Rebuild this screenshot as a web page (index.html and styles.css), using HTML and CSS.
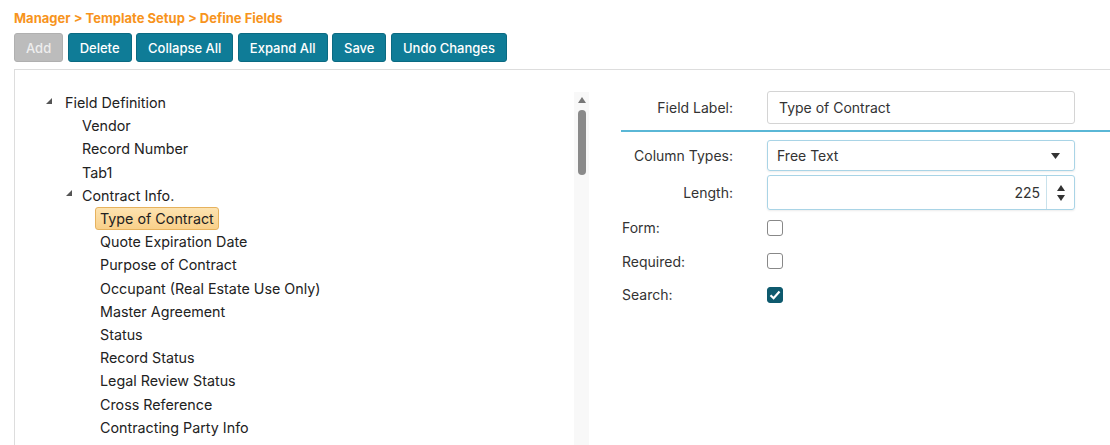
FILE: index.html
```html
<!DOCTYPE html>
<html lang="en">
<head>
    <meta charset="UTF-8">
    <title>Define Fields</title>
    <link rel="stylesheet" href="styles.css">
</head>
<body>
    <div class="crumb">Manager &gt; Template Setup &gt; Define Fields</div>

    <div class="toolbar">
        <button class="btn disabled">Add</button>
        <button class="btn">Delete</button>
        <button class="btn">Collapse All</button>
        <button class="btn">Expand All</button>
        <button class="btn">Save</button>
        <button class="btn">Undo Changes</button>
    </div>

    <div class="panel">
        <div class="tree-pane">
            <ul class="tree">
                <li class="node lvl0"><span class="arrow"><svg width="6" height="6" viewBox="0 0 6 6"><polygon points="6,0 6,6 0,6" fill="#555"/></svg></span><span class="label">Field Definition</span></li>
                <li class="node lvl1"><span class="label">Vendor</span></li>
                <li class="node lvl1"><span class="label">Record Number</span></li>
                <li class="node lvl1"><span class="label">Tab1</span></li>
                <li class="node lvl1 has-arrow"><span class="arrow"><svg width="6" height="6" viewBox="0 0 6 6"><polygon points="6,0 6,6 0,6" fill="#555"/></svg></span><span class="label">Contract Info.</span></li>
                <li class="node lvl2"><span class="label selected">Type of Contract</span></li>
                <li class="node lvl2"><span class="label">Quote Expiration Date</span></li>
                <li class="node lvl2"><span class="label">Purpose of Contract</span></li>
                <li class="node lvl2"><span class="label">Occupant (Real Estate Use Only)</span></li>
                <li class="node lvl2"><span class="label">Master Agreement</span></li>
                <li class="node lvl2"><span class="label">Status</span></li>
                <li class="node lvl2"><span class="label">Record Status</span></li>
                <li class="node lvl2"><span class="label">Legal Review Status</span></li>
                <li class="node lvl2"><span class="label">Cross Reference</span></li>
                <li class="node lvl2"><span class="label">Contracting Party Info</span></li>
            </ul>
            <div class="scrollbar">
                <svg class="up" width="8" height="6" viewBox="0 0 8 6"><polygon points="4,0 8,6 0,6" fill="#777"/></svg>
                <div class="thumb"></div>
            </div>
        </div>

        <div class="form">
            <div class="row top">
                <label class="lbl right">Field Label:</label>
                <div class="input">Type of Contract</div>
            </div>
            <div class="divider"></div>
            <div class="row">
                <label class="lbl right">Column Types:</label>
                <div class="select">
                    <span>Free Text</span>
                    <svg width="9" height="6" viewBox="0 0 9 6"><polygon points="0,0 9,0 4.5,6" fill="#333"/></svg>
                </div>
            </div>
            <div class="row length-row">
                <label class="lbl right">Length:</label>
                <div class="numeric">
                    <span class="num">225</span>
                    <span class="spin">
                        <svg width="8" height="6" viewBox="0 0 8 6"><polygon points="4,0 8,6 0,6" fill="#333"/></svg>
                        <svg width="8" height="6" viewBox="0 0 8 6"><polygon points="0,0 8,0 4,6" fill="#333"/></svg>
                    </span>
                </div>
            </div>
            <div class="row check-row first">
                <label class="lbl">Form:</label>
                <span class="check"></span>
            </div>
            <div class="row check-row">
                <label class="lbl">Required:</label>
                <span class="check"></span>
            </div>
            <div class="row check-row">
                <label class="lbl">Search:</label>
                <span class="check on"><svg width="12" height="10" viewBox="0 0 12 10"><polyline points="1.5,5.2 4.6,8.2 10.5,1.5" fill="none" stroke="#fff" stroke-width="2.2"/></svg></span>
            </div>
        </div>
    </div>
</body>
</html>
```

FILE: styles.css
```css
body {
    margin: 0;
    padding: 10px 0 0 14px;
    font-family: Inter, "Liberation Sans", sans-serif;
    color: #222;
    background: #fff;
    overflow: hidden;
}
.crumb {
    color: #f7941d;
    font-weight: 700;
    font-size: 13px;
    line-height: 17px;
}
.toolbar {
    display: flex;
    gap: 4.5px;
    margin-top: 6px;
}
.btn {
    height: 29px;
    padding: 0 11px;
    background: #0f7c97;
    border: 1px solid #0b6a82;
    border-radius: 3px;
    color: #fff;
    font-family: Inter, "Liberation Sans", sans-serif;
    font-size: 13px;
    font-weight: 500;
    cursor: pointer;
}
.btn.disabled {
    background: #bcbcbc;
    border-color: #b0b0b0;
    color: #eee;
    padding: 0 11px;
}
.panel {
    display: flex;
    margin-top: 7px;
    border-top: 1px solid #ddd;
    border-left: 1px solid #ddd;
    height: 380px;
}
.tree-pane {
    display: flex;
    width: 574px;
}
.tree {
    list-style: none;
    margin: 0;
    padding: 21px 0 0 0;
    flex: 1;
    font-size: 14.3px;
}
.node {
    display: flex;
    align-items: center;
    height: 23.2px;
}
.arrow {
    display: inline-flex;
    width: 14px;
    margin-top: -4px;
}
.lvl0 { padding-left: 31px; }
.lvl1 { padding-left: 62px; }
.lvl1.has-arrow { padding-left: 51px; }
.lvl1.has-arrow .arrow { width: 11px; }
.lvl2 { padding-left: 80px; }
.label {
    padding: 2px 4px;
    border: 1px solid transparent;
    border-radius: 3px;
    white-space: nowrap;
}
.label.selected {
    background: linear-gradient(#fde3b0, #f9d08a);
    border-color: #e6b25e;
}
.scrollbar {
    width: 15px;
    margin-top: 22px;
    background: #f8f8f8;
    display: flex;
    flex-direction: column;
    align-items: center;
}
.scrollbar .up {
    margin-top: 5px;
}
.thumb {
    width: 8px;
    height: 65px;
    margin-top: 7px;
    background: #8a8a8a;
    border-radius: 4px;
}
.form {
    flex: 1;
    padding: 21px 0 0 33px;
    font-size: 14px;
}
.row {
    display: flex;
    align-items: center;
}
.lbl {
    width: 111px;
    margin-right: 34px;
    color: #333;
}
.lbl.right {
    text-align: right;
}
.input, .select, .numeric {
    width: 308px;
    box-sizing: border-box;
    border-radius: 3px;
    display: flex;
    align-items: center;
    color: #333;
}
.input {
    height: 33px;
    border: 1px solid #d4d4d4;
    padding: 0 11px;
}
.divider {
    height: 2px;
    background: #5ab7d6;
    margin: 6px 0 8px -1px;
}
.select {
    height: 31px;
    border: 1px solid #a9d4e6;
    padding: 0 14px 0 9px;
    justify-content: space-between;
    box-shadow: 0 1px 2px rgba(0,0,0,0.08);
}
.length-row {
    margin-top: 4px;
}
.numeric {
    height: 35px;
    border: 1px solid #a9d4e6;
    box-shadow: 0 1px 2px rgba(0,0,0,0.08);
}
.num {
    flex: 1;
    text-align: right;
    padding-right: 6px;
}
.spin {
    width: 27px;
    height: 100%;
    border-left: 1px solid #c9e2ec;
    display: flex;
    flex-direction: column;
    align-items: center;
    justify-content: center;
    gap: 4px;
}
.check-row {
    height: 33.5px;
}
.check-row .lbl {
    text-align: left;
}
.check-row.first {
    margin-top: 1px;
}
.check {
    width: 16px;
    height: 16px;
    box-sizing: border-box;
    border: 1px solid #888;
    border-radius: 3px;
    display: inline-flex;
    align-items: center;
    justify-content: center;
}
.check.on {
    background: #0e5a6e;
    border-color: #0e5a6e;
}
```
